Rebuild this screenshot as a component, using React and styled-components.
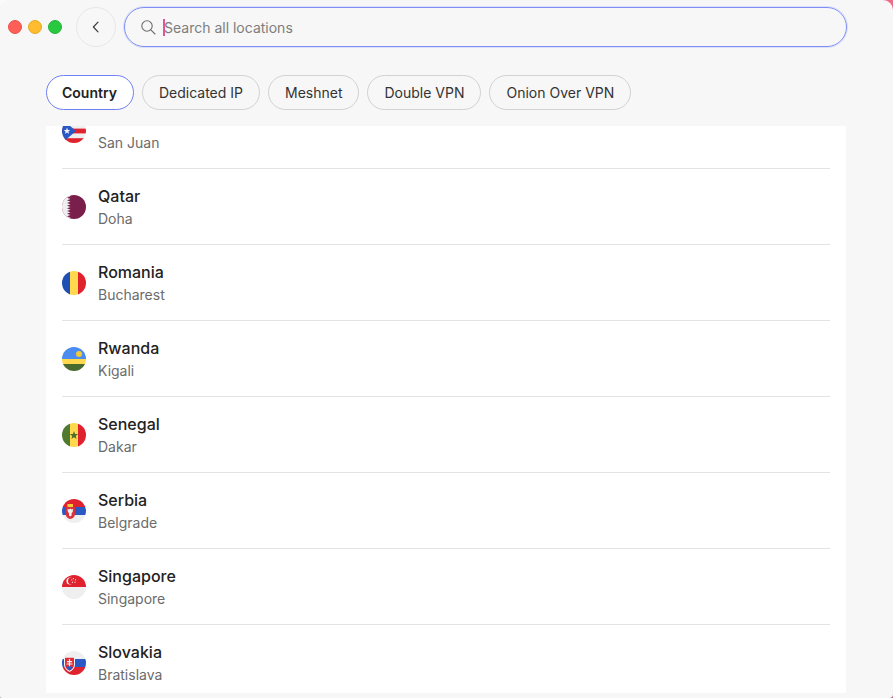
import React from "react";
import styled, { createGlobalStyle } from "styled-components";

const Global = createGlobalStyle`
  html, body { margin: 0; padding: 0; height: 100%; }
  body {
    background:
      linear-gradient(to right, #fafafa 50%, #ee6a86 50%) top / 100% 50% no-repeat,
      linear-gradient(to right, #b9a0a8 50%, #c4647e 50%) bottom / 100% 50% no-repeat;
  }
  #root { height: 100%; }
  * { box-sizing: border-box; }
`;

const Page = styled.div`
  width: 893px;
  height: 698px;
  background: #f7f7f7;
  font-family: Inter, "Liberation Sans", sans-serif;
  overflow: hidden;
  display: flex;
  flex-direction: column;
  border-radius: 9px 10px 4px 2px;
`;

const TopBar = styled.header`
  display: flex;
  align-items: center;
  height: 40px;
  margin-top: 7px;
  padding-left: 8px;
`;

const Lights = styled.div`
  display: flex;
  gap: 6px;
  margin-right: 14px;
`;

const Light = styled.span`
  width: 14px;
  height: 14px;
  border-radius: 50%;
  background: ${(p) => p.$color};
  border: 1px solid ${(p) => p.$edge};
`;

const BackButton = styled.button`
  width: 40px;
  height: 40px;
  border-radius: 50%;
  border: 1px solid #e6e6e6;
  background: #f7f7f7;
  padding: 0;
  margin-right: 8px;
  display: flex;
  align-items: center;
  justify-content: center;
  color: #3b3b3b;
`;

const SearchBox = styled.div`
  width: 723px;
  height: 40px;
  border-radius: 20px;
  border: 1px solid #7f8ef7;
  box-shadow: 0 0 0 1px rgba(157, 168, 251, 0.3);
  display: flex;
  align-items: center;
  padding-left: 16px;
  color: #6e6e6e;
`;

const Caret = styled.span`
  width: 2px;
  height: 17px;
  background: #e0559a;
  margin-left: 7px;
`;

const Placeholder = styled.span`
  font-size: 14px;
  color: #7d7d7d;
  line-height: 17px;
  margin-left: -1px;
`;

const Tabs = styled.nav`
  display: flex;
  gap: 8px;
  padding: 28px 0 0 46px;
  height: 79px;
`;

const Tab = styled.button`
  height: 35px;
  padding: ${(p) => (p.$active ? "0 16px 0 15px" : "0 16px")};
  border-radius: 18px;
  font-family: inherit;
  font-size: 14px;
  font-weight: ${(p) => (p.$active ? 600 : 400)};
  color: ${(p) => (p.$active ? "#222" : "#333")};
  background: ${(p) => (p.$active ? "#fff" : "#f7f7f7")};
  border: 1px solid ${(p) => (p.$active ? "#6f80f5" : "#d2d2d2")};
`;

const Panel = styled.main`
  width: 800px;
  height: 567px;
  margin-left: 46px;
  background: #fff;
  overflow: hidden;
  padding: 0 16px;
`;

const List = styled.ul`
  list-style: none;
  margin: -33px 0 0;
  padding: 0;
`;

const Row = styled.li`
  height: 76px;
  display: flex;
  align-items: center;
  gap: 12px;
  border-bottom: 1px solid ${(p) => (p.$last ? "transparent" : "#e3e3e3")};
  padding-top: 1px;
`;

const Flag = styled.svg`
  width: 24px;
  height: 24px;
  flex: none;
  display: block;
`;

const Texts = styled.div`
  display: flex;
  flex-direction: column;
  gap: 5px;
`;

const Name = styled.div`
  font-size: 16px;
  line-height: 17px;
  font-weight: 500;
  color: #222;
`;

const City = styled.div`
  font-size: 14px;
  line-height: 17px;
  color: #6b6b6b;
`;

const flags = {
  pr: (
    <>
      <rect width="24" height="24" fill="#efefef" />
      <rect width="24" height="4.8" fill="#e0222f" />
      <rect y="9.6" width="24" height="4.8" fill="#e0222f" />
      <rect y="19.2" width="24" height="4.8" fill="#e0222f" />
      <path d="M0 0 L14 12 L0 24 Z" fill="#2a58c4" />
      <path d="M5 8.600l.9 2.300 2.400.1-1.900 1.500.7 2.400-2.100-1.400-2.100 1.400.7-2.400-1.900-1.500 2.400-.1z" fill="#f2f2f2" />
    </>
  ),
  qa: (
    <>
      <rect width="24" height="24" fill="#7a1f4b" />
      <path
        d="M0 0H5L8.500 1.330 5 2.670 8.500 4 5 5.330 8.500 6.670 5 8 8.500 9.330 5 10.670 8.500 12 5 13.330 8.500 14.670 5 16 8.500 17.330 5 18.670 8.500 20 5 21.330 8.500 22.670 5 24H0Z"
        fill="#efefef"
      />
    </>
  ),
  ro: (
    <>
      <rect width="8" height="24" fill="#1f4fb4" />
      <rect x="8" width="8" height="24" fill="#ffd84d" />
      <rect x="16" width="8" height="24" fill="#e0222f" />
    </>
  ),
  rw: (
    <>
      <rect width="24" height="12" fill="#4a8cf0" />
      <rect y="12" width="24" height="5" fill="#ffd84d" />
      <rect y="17" width="24" height="7" fill="#4a6b2f" />
      <circle cx="17" cy="7" r="3" fill="#f2c936" />
    </>
  ),
  sn: (
    <>
      <rect width="8" height="24" fill="#4f7a2f" />
      <rect x="8" width="8" height="24" fill="#ffd84d" />
      <rect x="16" width="8" height="24" fill="#e0222f" />
      <path d="M12 8l1.100 2.900 3.100.1-2.400 1.900.8 3-2.600-1.700-2.600 1.700.8-3-2.400-1.900 3.100-.1z" fill="#4f6f2f" />
    </>
  ),
  rs: (
    <>
      <rect width="24" height="8" fill="#e0222f" />
      <rect y="8" width="24" height="8" fill="#2a58c4" />
      <rect y="16" width="24" height="8" fill="#efefef" />
      <path d="M3.700 8H13V15C13 18 10.500 19.500 8.300 20 6 19.500 3.700 18 3.700 15Z" fill="#d8323c" />
      <rect x="5.500" y="5" width="5.500" height="3" fill="#f5c93a" />
      <path d="M8.300 9.500l1 1 1.700-.5-.3 3-1.100 1v2.500l-1.300 1-1.300-1V14l-1.100-1-.3-3 1.700.5z" fill="#f4f4f4" />
    </>
  ),
  sg: (
    <>
      <rect width="24" height="12" fill="#e0222f" />
      <rect y="12" width="24" height="12" fill="#efefef" />
      <circle cx="8" cy="6" r="3.600" fill="#f4f4f4" />
      <circle cx="9.400" cy="6" r="3.400" fill="#e0222f" />
      <g fill="#f4f4f4">
        <circle cx="11.500" cy="3.600" r=".6" />
        <circle cx="13.600" cy="4.800" r=".6" />
        <circle cx="13" cy="7.200" r=".6" />
        <circle cx="10.400" cy="7.200" r=".6" />
        <circle cx="9.800" cy="4.800" r=".6" />
      </g>
    </>
  ),
  sk: (
    <>
      <rect width="24" height="8" fill="#efefef" />
      <rect y="8" width="24" height="8" fill="#2a58c4" />
      <rect y="16" width="24" height="8" fill="#e0222f" />
      <path d="M2 5.700H13V13.500C13 17 10.500 19.500 7.500 21 4.500 19.500 2 17 2 13.500Z" fill="#f4f4f4" />
      <path d="M3 6.700H12V13.500C12 16.400 10 18.500 7.500 19.800 5 18.500 3 16.400 3 13.500Z" fill="#df2b35" />
      <path d="M6.900 8h1.200v2h2v1.200h-2v1.200h2.400v1.200H8.100v2.400H6.900v-2.400H4.500v-1.200h2.400v-1.200h-2V10h2z" fill="#f4f4f4" />
      <path d="M4.200 16.500c1-1.200 1.900-1.200 3.300-1.200s2.300 0 3.300 1.200c-.8 1.200-2.300 2.400-3.300 3-1-.6-2.500-1.800-3.300-3z" fill="#2a58c4" />
    </>
  ),
};

const FlagIcon = ({ code }) => (
  <Flag viewBox="0 0 24 24">
    <clipPath id={`clip-${code}`}>
      <circle cx="12" cy="12" r="12" />
    </clipPath>
    <g clipPath={`url(#clip-${code})`}>{flags[code]}</g>
  </Flag>
);

const rows = [
  ["pr", "Puerto Rico", "San Juan"],
  ["qa", "Qatar", "Doha"],
  ["ro", "Romania", "Bucharest"],
  ["rw", "Rwanda", "Kigali"],
  ["sn", "Senegal", "Dakar"],
  ["rs", "Serbia", "Belgrade"],
  ["sg", "Singapore", "Singapore"],
  ["sk", "Slovakia", "Bratislava"],
];

const tabs = ["Country", "Dedicated IP", "Meshnet", "Double VPN", "Onion Over VPN"];

export default function App() {
  return (
    <Page>
      <Global />
      <TopBar>
        <Lights>
          <Light $color="#ff5f57" $edge="#e8534c" />
          <Light $color="#febc2e" $edge="#e5a92a" />
          <Light $color="#28c840" $edge="#24b53a" />
        </Lights>
        <BackButton aria-label="Back">
          <svg width="16" height="16" viewBox="0 0 16 16" fill="none" stroke="currentColor" strokeWidth="1.2" strokeLinecap="round" strokeLinejoin="round">
            <path d="M10 3.200 5.400 8 10 12.800" />
          </svg>
        </BackButton>
        <SearchBox>
          <svg width="15" height="15" viewBox="0 0 15 15" fill="none" stroke="currentColor" strokeWidth="1.1" strokeLinecap="round">
            <circle cx="6" cy="6" r="5.200" />
            <path d="M9.800 9.800 14 14" />
          </svg>
          <Caret />
          <Placeholder>Search all locations</Placeholder>
        </SearchBox>
      </TopBar>
      <Tabs>
        {tabs.map((t, i) => (
          <Tab key={t} $active={i === 0}>{t}</Tab>
        ))}
      </Tabs>
      <Panel>
        <List>
          {rows.map(([code, name, city], i) => (
            <Row key={code} $last={i === rows.length - 1}>
              <FlagIcon code={code} />
              <Texts>
                <Name>{name}</Name>
                <City>{city}</City>
              </Texts>
            </Row>
          ))}
        </List>
      </Panel>
    </Page>
  );
}
